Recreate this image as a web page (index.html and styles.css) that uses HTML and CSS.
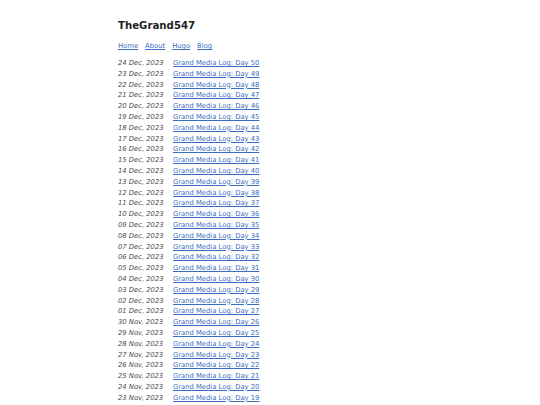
FILE: index.html
```html
<!DOCTYPE html>
<html>
<head>
<meta charset="utf-8">
<link rel="stylesheet" href="styles.css">
</head>
<body>
<div class="page">
  <h1 class="title">TheGrand547</h1>
  <nav class="nav">
    <a href="#">Home</a>
    <a href="#">About</a>
    <a href="#">Hugo</a>
    <a href="#">Blog</a>
  </nav>
  <ul class="posts">
    <li><span class="date">24 Dec, 2023</span><a href="#">Grand Media Log: Day 50</a></li>
    <li><span class="date">23 Dec, 2023</span><a href="#">Grand Media Log: Day 49</a></li>
    <li><span class="date">22 Dec, 2023</span><a href="#">Grand Media Log: Day 48</a></li>
    <li><span class="date">21 Dec, 2023</span><a href="#">Grand Media Log: Day 47</a></li>
    <li><span class="date">20 Dec, 2023</span><a href="#">Grand Media Log: Day 46</a></li>
    <li><span class="date">19 Dec, 2023</span><a href="#">Grand Media Log: Day 45</a></li>
    <li><span class="date">18 Dec, 2023</span><a href="#">Grand Media Log: Day 44</a></li>
    <li><span class="date">17 Dec, 2023</span><a href="#">Grand Media Log: Day 43</a></li>
    <li><span class="date">16 Dec, 2023</span><a href="#">Grand Media Log: Day 42</a></li>
    <li><span class="date">15 Dec, 2023</span><a href="#">Grand Media Log: Day 41</a></li>
    <li><span class="date">14 Dec, 2023</span><a href="#">Grand Media Log: Day 40</a></li>
    <li><span class="date">13 Dec, 2023</span><a href="#">Grand Media Log: Day 39</a></li>
    <li><span class="date">12 Dec, 2023</span><a href="#">Grand Media Log: Day 38</a></li>
    <li><span class="date">11 Dec, 2023</span><a href="#">Grand Media Log: Day 37</a></li>
    <li><span class="date">10 Dec, 2023</span><a href="#">Grand Media Log: Day 36</a></li>
    <li><span class="date">09 Dec, 2023</span><a href="#">Grand Media Log: Day 35</a></li>
    <li><span class="date">08 Dec, 2023</span><a href="#">Grand Media Log: Day 34</a></li>
    <li><span class="date">07 Dec, 2023</span><a href="#">Grand Media Log: Day 33</a></li>
    <li><span class="date">06 Dec, 2023</span><a href="#">Grand Media Log: Day 32</a></li>
    <li><span class="date">05 Dec, 2023</span><a href="#">Grand Media Log: Day 31</a></li>
    <li><span class="date">04 Dec, 2023</span><a href="#">Grand Media Log: Day 30</a></li>
    <li><span class="date">03 Dec, 2023</span><a href="#">Grand Media Log: Day 29</a></li>
    <li><span class="date">02 Dec, 2023</span><a href="#">Grand Media Log: Day 28</a></li>
    <li><span class="date">01 Dec, 2023</span><a href="#">Grand Media Log: Day 27</a></li>
    <li><span class="date">30 Nov, 2023</span><a href="#">Grand Media Log: Day 26</a></li>
    <li><span class="date">29 Nov, 2023</span><a href="#">Grand Media Log: Day 25</a></li>
    <li><span class="date">28 Nov, 2023</span><a href="#">Grand Media Log: Day 24</a></li>
    <li><span class="date">27 Nov, 2023</span><a href="#">Grand Media Log: Day 23</a></li>
    <li><span class="date">26 Nov, 2023</span><a href="#">Grand Media Log: Day 22</a></li>
    <li><span class="date">25 Nov, 2023</span><a href="#">Grand Media Log: Day 21</a></li>
    <li><span class="date">24 Nov, 2023</span><a href="#">Grand Media Log: Day 20</a></li>
    <li><span class="date">23 Nov, 2023</span><a href="#">Grand Media Log: Day 19</a></li>
  </ul>
</div>
</body>
</html>
```

FILE: styles.css
```css
html, body {
  margin: 0;
  padding: 0;
  background: #ffffff;
}
body {
  font-family: "DejaVu Sans", Verdana, sans-serif;
  color: #222222;
}
.page {
  width: 304px;
  margin: 0 auto;
  padding-top: 19px;
}
.title {
  margin: 0;
  font-size: 10.2px;
  line-height: 14px;
  font-weight: bold;
  color: #1f1f1f;
}
.nav {
  margin-top: 9px;
  display: flex;
  gap: 7px;
  font-size: 6.8px;
  line-height: 9px;
}
.nav a, .posts a {
  color: #3a6dc2;
  text-decoration: underline;
}
.posts {
  list-style: none;
  margin: 7px 0 0;
  padding: 0;
  font-size: 6.8px;
  line-height: 10.8px;
}
.posts li {
  display: flex;
}
.date {
  width: 55px;
  font-style: italic;
  color: #4a4a4a;
}
```
